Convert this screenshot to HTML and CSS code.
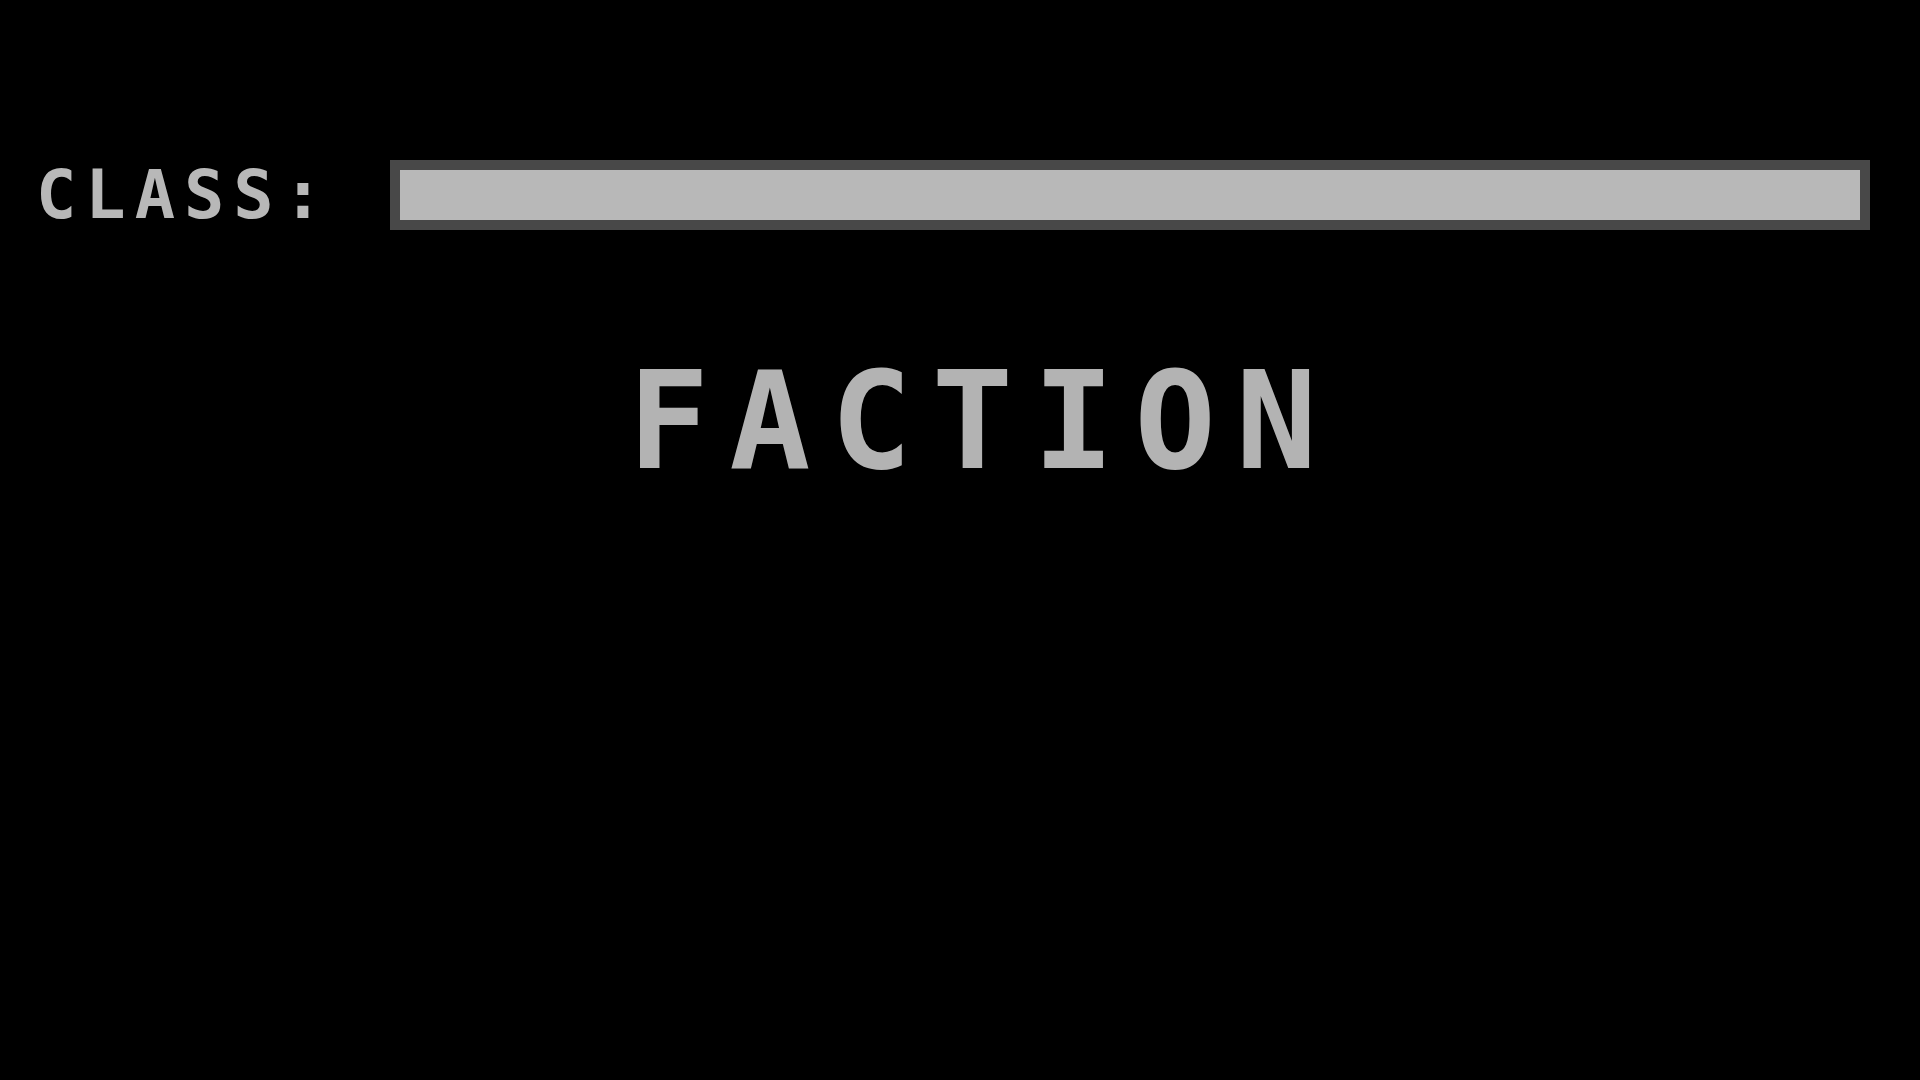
FILE: index.html
```html
<!DOCTYPE html>
<html lang="en">
<head>
<meta charset="utf-8">
<title>Faction</title>
<link rel="stylesheet" href="styles.css">
</head>
<body>
<main class="screen">
  <div class="class-row">
    <span class="class-label">CLASS:</span>
    <div class="class-bar"></div>
  </div>
  <h1 class="faction-title">FACTION</h1>
</main>
</body>
</html>
```

FILE: styles.css
```css
html, body {
  margin: 0;
  padding: 0;
  background: #000;
  width: 1920px;
  height: 1080px;
  overflow: hidden;
}

.screen {
  display: flex;
  flex-direction: column;
  padding: 160px 50px 0 36px;
  font-family: "DejaVu Sans Mono", "Liberation Mono", monospace;
  font-weight: bold;
}

.class-row {
  display: flex;
  align-items: center;
  height: 70px;
}

.class-label {
  width: 354px;
  flex: none;
  font-size: 67px;
  letter-spacing: 9px;
  color: #b8b8b8;
  line-height: 70px;
}

.class-bar {
  flex: 1;
  height: 50px;
  border: 10px solid #484848;
  background: #b8b8b8;
}

.faction-title {
  margin: 132px 0 0 0;
  padding-left: 592px;
  font-size: 135px;
  font-weight: bold;
  letter-spacing: 20px;
  line-height: 120px;
  color: #b3b3b3;
}
```
